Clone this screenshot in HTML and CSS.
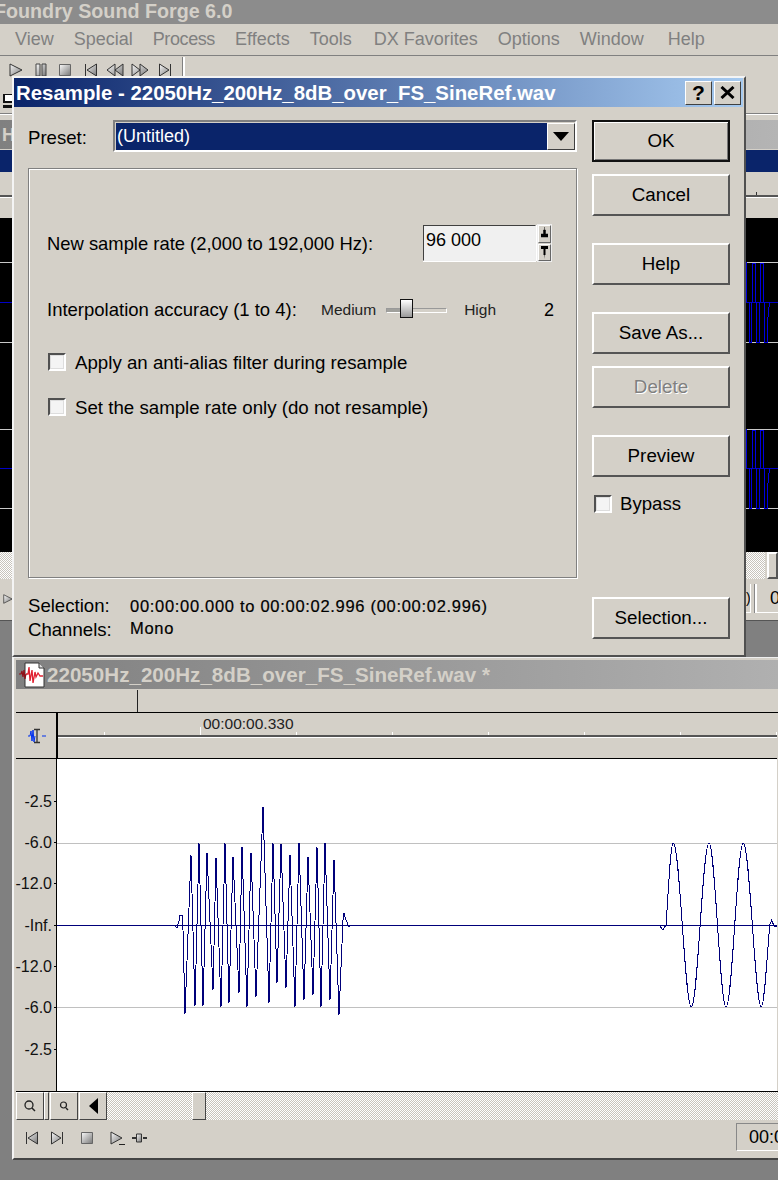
FILE: index.html
```html
<!DOCTYPE html>
<html lang="en">
<head>
<meta charset="utf-8">
<title>Sound Forge - Resample</title>
<link rel="stylesheet" href="styles.css">
</head>
<body>
<svg class="defs" width="0" height="0" aria-hidden="true">
  <defs>
    <linearGradient id="metal" x1="0" y1="0" x2="1" y2="1">
      <stop offset="0" stop-color="#fafafa"/>
      <stop offset="1" stop-color="#777"/>
    </linearGradient>
    <symbol id="i-play" viewBox="0 0 14 14"><path d="M1 1L13 7L1 13Z" fill="url(#metal)" stroke="#333"/></symbol>
    <symbol id="i-pause" viewBox="0 0 14 14"><path d="M2 1h4v12H2ZM8 1h4v12H8Z" fill="url(#metal)" stroke="#444"/></symbol>
    <symbol id="i-stop" viewBox="0 0 14 14"><path d="M1.500 1.500h11v11h-11Z" fill="url(#metal)" stroke="#666"/></symbol>
    <symbol id="i-start" viewBox="0 0 14 14"><path d="M1.500 1v12M12.500 1L3 7L12.500 13Z" fill="url(#metal)" stroke="#333"/></symbol>
    <symbol id="i-end" viewBox="0 0 14 14"><path d="M12.500 1v12M1.500 1L11 7L1.500 13Z" fill="url(#metal)" stroke="#333"/></symbol>
    <symbol id="i-rew" viewBox="0 0 18 14"><path d="M9 1L1 7L9 13ZM17 1L9 7L17 13Z" fill="url(#metal)" stroke="#333"/></symbol>
    <symbol id="i-ff" viewBox="0 0 18 14"><path d="M1 1L9 7L1 13ZM9 1L17 7L9 13Z" fill="url(#metal)" stroke="#333"/></symbol>
  </defs>
</svg>

<div class="app">
  <div class="app-title">Foundry Sound Forge 6.0</div>
  <nav class="menu">
    <span>View</span><span>Special</span><span class="m-process">Process</span><span>Effects</span><span>Tools</span><span class="m-dx">DX Favorites</span><span>Options</span><span>Window</span><span class="m-help">Help</span>
  </nav>
  <div class="toolbar">
    <div class="tool-row">
      <svg class="ic ic-play"><use href="#i-play"/></svg>
      <svg class="ic ic-pause"><use href="#i-pause"/></svg>
      <svg class="ic ic-stop"><use href="#i-stop"/></svg>
      <svg class="ic ic-start"><use href="#i-start"/></svg>
      <svg class="ic-w ic-rew"><use href="#i-rew"/></svg>
      <svg class="ic-w ic-ff"><use href="#i-ff"/></svg>
      <svg class="ic ic-end"><use href="#i-end"/></svg>
      <i class="tool-divider"></i>
    </div>
    <svg class="floppy" width="10" height="14" viewBox="0 0 10 14"><path d="M0 0h10v14H0Z" fill="#111"/><path d="M2 1h7v6H2Z" fill="#fff"/><path d="M0 9h10v2H0Z" fill="#d4d0c8"/></svg>
  </div>

  <section class="back">
    <div class="back-title">H</div>
    <div class="back-active"></div>
    <div class="back-band"><i class="back-mark"></i></div>
    <div class="back-ruler"></div>
    <svg class="back-wave" width="778" height="334" viewBox="0 0 778 334">
      <rect width="778" height="334" fill="#000"/>
      <path d="M0 44.500H778M0 124.500H778M0 211.500H778M0 290.500H778" stroke="#c8c8c8" fill="none"/>
      <path d="M0 84.500H778M0 250.500H778" stroke="#0000c8" fill="none"/>
      <g fill="none" stroke="#0000e0" shape-rendering="crispEdges">
        <path d="M746.500 44V84M752.500 84V45H755.500V84M760.500 84V45H763.500V84M749.500 84V124H751.500V84M756.500 84V124H759.500V84M764.500 84V124H767.500V104L769.500 84"/>
        <path d="M746.500 211V250M752.500 250V212H755.500V250M760.500 250V212H763.500V250M749.500 250V290H751.500V250M756.500 250V290H759.500V250M764.500 250V290H767.500V270L769.500 250"/>
      </g>
    </svg>
    <div class="back-scroll"><i class="checker checker-a"></i><i class="back-thumb"></i></div>
    <div class="back-status">
      <svg class="ic ic-back-play"><use href="#i-play"/></svg>
      <span class="status-box status-cut">)</span>
      <span class="status-box status-zero">0</span>
    </div>
  </section>

  <section class="win">
    <div class="win-title">
      <svg class="file-icon" width="27" height="26" viewBox="0 0 27 26">
        <path d="M7 1H21L26 6V25H7Z" fill="#fff" stroke="#333"/>
        <path d="M21 1V6H26" fill="#ddd" stroke="#333"/>
        <path d="M8 12H10L11 5L12 19L14 8L15 21L17 10L18 15L20 11L22 14H25" fill="none" stroke="#e02030" stroke-width="1.300"/>
        <path d="M1 12H3L4 9L5 15L6 8L7 17L8 12" fill="none" stroke="#901018" stroke-width="1.200"/>
      </svg>
      <span>22050Hz_200Hz_8dB_over_FS_SineRef.wav *</span>
    </div>
    <div class="win-marker"><i class="marker-line"></i></div>
    <div class="win-main">
      <aside class="side">
        <div class="side-head">
          <svg width="20" height="16" viewBox="0 0 20 16">
            <path d="M1 8H3L4 3L5 13L6 2L7 14L8 8M15 8H19" fill="none" stroke="#0030f0"/>
            <path d="M7 1.500H13M10 1.500V14.500M7 14.500H13" fill="none" stroke="#333" stroke-width="1.300"/>
          </svg>
        </div>
        <div class="scale">
          <span>-2.5</span><span>-6.0</span><span>-12.0</span><span>-Inf.</span><span>-12.0</span><span>-6.0</span><span>-2.5</span>
        </div>
      </aside>
      <div class="track">
        <div class="ruler">
          <span class="ruler-time">00:00:00.330</span>
          <svg class="ruler-ticks" width="720" height="8" viewBox="0 0 720 8">
            <path d="M47.500 5V8M143.500 0V8M239.500 5V8M335.500 5V8M431.500 5V8M527.500 5V8M623.500 5V8M719.500 5V8" stroke="#fff"/>
          </svg>
        </div>
        <div class="ruler-gap"></div>
        <svg class="wave" width="720" height="332" viewBox="58 759 720 332">
          <rect x="58" y="759" width="720" height="332" fill="#fff"/>
          <path d="M58 843.500H778M58 1007.500H778" stroke="#c0c0c0"/>
          <path d="M58 925.500H778" stroke="#00007a"/>
          <g fill="none" stroke="#00007a" shape-rendering="crispEdges">
            <polyline points="176,926 178,928 180,921 181,915 183,915 184,930 186,1014 192,855 196,1006 200,843 204,1006 208,853 214,990 217,858 222,1007 226,843 230,1003 234,857 240,993 243,847 248,1007 252,853 257,997 264,807 270,1003 274,843 278,983 282,844 287,988 291,855 296,1007 300,843 305,1000 309,857 314,995 318,847 322,1007 326,843 331,1000 335,860 340,1015 344,920 345,913 347,920 350,927 352,925"/>
            <path d="M660 925L664 930L667 925C669.500 890 671.500 843 674.300 843C680.800 843 685.800 1007 692.300 1007C698.800 1007 703.500 843 710 843C716 843 721 1007 727 1007C733.500 1007 738 843 744.300 843C750.800 843 756 1007 762.300 1007C765 1007 768 960 770.700 925L772.700 920L775 926L778 926"/>
          </g>
        </svg>
      </div>
    </div>
    <div class="scrollbar">
      <button class="sb-btn" type="button"><svg width="14" height="14" viewBox="0 0 14 14"><circle cx="6" cy="6" r="4" fill="none" stroke="#222" stroke-width="1.300"/><path d="M9 9L12 12" stroke="#222" stroke-width="1.500"/></svg></button>
      <i class="sb-split"></i>
      <button class="sb-btn" type="button"><svg width="12" height="12" viewBox="0 0 12 12"><circle cx="5.500" cy="5" r="3" fill="none" stroke="#222" stroke-width="1.200"/><path d="M8 8L10 10" stroke="#222" stroke-width="1.500"/></svg></button>
      <button class="sb-btn sb-arrow" type="button"><svg width="9" height="16" viewBox="0 0 9 16"><path d="M9 0V16L0 8Z" fill="#000"/></svg></button>
      <div class="checker sb-track"><i class="sb-thumb"></i></div>
    </div>
    <div class="transport">
      <svg class="ic t-start"><use href="#i-start"/></svg>
      <svg class="ic t-end"><use href="#i-end"/></svg>
      <svg class="ic t-stop"><use href="#i-stop"/></svg>
      <svg class="t-play" width="16" height="15" viewBox="0 0 16 15"><path d="M1 1L12 7L1 13Z" fill="url(#metal)" stroke="#333"/><path d="M9 13.500H15" stroke="#222"/></svg>
      <svg class="t-slide" width="17" height="10" viewBox="0 0 17 10"><path d="M1 5H5M12 5H16" stroke="#333" stroke-width="2"/><path d="M5.500 1H10.500V9H5.500Z" fill="url(#metal)" stroke="#333"/></svg>
      <span class="counter">00:00</span>
    </div>
  </section>
</div>

<div class="dialog">
  <header class="dlg-title">
    <span class="dlg-caption">Resample - 22050Hz_200Hz_8dB_over_FS_SineRef.wav</span>
    <span class="cap-btn cap-help">?</span>
    <span class="cap-btn"><svg width="15" height="13" viewBox="0 0 15 13"><path d="M1.500 1L13.500 12M13.500 1L1.500 12" stroke="#000" stroke-width="3"/></svg></span>
  </header>
  <div class="dlg-body">
    <div class="dlg-left">
      <div class="preset">
        <label class="preset-label">Preset:</label>
        <div class="combo">
          <span class="combo-value">(Untitled)</span>
          <span class="combo-btn"><svg width="16" height="9" viewBox="0 0 16 9"><path d="M0 0H16L8 9Z" fill="#000"/></svg></span>
        </div>
      </div>
      <div class="group">
        <div class="row-rate">
          <span class="rate-label">New sample rate (2,000 to 192,000 Hz):</span>
          <span class="rate-input">96 000</span>
          <span class="spin">
            <span class="spin-btn"><svg width="7" height="13" viewBox="0 0 7 13"><path d="M3.500 0V3M2.500 3H4.500V7H7V10H0V7H2.500Z" fill="#000" stroke="#000" stroke-width=".5"/></svg></span>
            <span class="spin-btn"><svg width="7" height="13" viewBox="0 0 7 13"><path d="M0 0H7V3H4.500V9H3.500V13L3 9H2.500V3H0Z" fill="#000"/></svg></span>
          </span>
        </div>
        <div class="row-interp">
          <span class="interp-label">Interpolation accuracy (1 to 4):</span>
          <span class="small-label">Medium</span>
          <span class="slider"><i class="slider-thumb"></i></span>
          <span class="small-label high">High</span>
          <span class="interp-value">2</span>
        </div>
        <div class="check-row first"><i class="check"></i><span>Apply an anti-alias filter during resample</span></div>
        <div class="check-row second"><i class="check"></i><span>Set the sample rate only (do not resample)</span></div>
      </div>
      <dl class="info">
        <dt>Selection:</dt><dd>00:00:00.000 to 00:00:02.996 (00:00:02.996)</dd>
        <dt>Channels:</dt><dd class="info-mono">Mono</dd>
      </dl>
    </div>
    <div class="dlg-right">
      <button class="btn btn-default" type="button">OK</button>
      <button class="btn near" type="button">Cancel</button>
      <button class="btn far" type="button">Help</button>
      <button class="btn far" type="button">Save As...</button>
      <button class="btn near btn-disabled" type="button">Delete</button>
      <button class="btn far" type="button">Preview</button>
      <div class="bypass"><i class="check"></i><span>Bypass</span></div>
      <button class="btn btn-selection" type="button">Selection...</button>
    </div>
  </div>
</div>
</body>
</html>
```
FILE: styles.css
```css
* { box-sizing: border-box; }
html, body { margin: 0; padding: 0; }
body {
  position: relative;
  width: 778px;
  height: 1180px;
  overflow: hidden;
  background: #808080;
  font-family: "Liberation Sans", Arial, sans-serif;
  font-size: 18px;
  color: #000;
}
i { display: block; font-style: normal; }
svg { display: block; }
.defs { position: absolute; }

.app { display: flex; flex-direction: column; width: 778px; height: 1180px; overflow: hidden; }
.app > * { flex: none; }

.app-title {
  height: 24px;
  background: #8c8c8c;
  color: #d4d0c8;
  font-weight: 700;
  font-size: 19.700px;
  line-height: 22px;
  text-indent: -6px;
  white-space: nowrap;
  overflow: hidden;
}
.menu {
  display: flex;
  gap: 20px;
  height: 32px;
  padding-left: 15px;
  line-height: 30px;
  background: #d4d0c8;
  color: #808080;
  border-bottom: 1px solid #808080;
  white-space: nowrap;
}
.m-process { letter-spacing: -.4px; }
.m-dx { margin-left: 2px; }
.m-help { margin-left: 4px; }
.toolbar { height: 57px; background: #d4d0c8; }
.tool-row { display: flex; height: 38px; padding: 7px 0 0 9px; }
.ic { width: 14px; height: 14px; flex: none; }
.ic-w { width: 18px; height: 14px; flex: none; }
.ic-pause { margin-left: 11px; }
.ic-stop { margin-left: 10px; }
.ic-start { margin-left: 12px; }
.ic-rew { margin-left: 8px; }
.ic-ff { margin-left: 7px; }
.ic-end { margin-left: 9px; }
.tool-divider { width: 2px; height: 20px; margin: -6px 0 0 11px; background: #fff; box-shadow: -1px 0 #808080; }
.floppy { margin-left: 3px; }

.back { display: flex; flex-direction: column; height: 508px; border-top: 1px solid #808080; background: #d4d0c8; box-shadow: inset 0 1px #fff; padding-top: 6px; }
.back > * { flex: none; }
.back-title {
  height: 29px;
  padding-left: 2px;
  background: linear-gradient(90deg, #808080, #b4b4b4);
  color: #d4d0c8;
  font-weight: 700;
  line-height: 30px;
}
.back-active { height: 22px; background: #0a246a; margin-top: 1px; }
.back-band { position: relative; height: 25px; border-bottom: 2px solid #555; }
.back-mark { position: absolute; left: 756px; bottom: 0; width: 1px; height: 3px; background: #333; }
.back-ruler { height: 21px; border-top: 1px solid #fff; }
.back-scroll { display: flex; justify-content: space-between; height: 27px; }
.checker-a { width: 765px; }
.checker {
  background: repeating-conic-gradient(#fff 0 25%, #c8c4bc 0 50%) 0 0 / 2px 2px;
}
.back-thumb { width: 11px; height: 27px; border: 2px solid; border-color: #fff #555 #555 #fff; background: #d4d0c8; }
.back-status { display: flex; align-items: flex-start; height: 42px; padding-top: 5px; border-bottom: 1px solid #555; }
.ic-back-play { margin: 8px 0 0 3px; width: 10px; }
.status-box { height: 29px; line-height: 28px; border-bottom: 1px solid #fff; overflow: hidden; }
.status-cut { margin-left: 733px; width: 5px; text-align: left; border-right: 1px solid #fff; font-size: 14px; }
.status-zero { flex: 1; margin-left: 4px; padding-left: 13px; border-left: 2px solid #fff; box-shadow: -1px 0 #888; }

.win {
  height: 503px;
  margin: 36px 0 0 12px;
  padding: 3px 0 0 2px;
  border-left: 2px solid #f4f4f4;
  border-bottom: 2px solid #444;
  background: #d4d0c8;
  box-shadow: inset 0 1px #eee;
  display: flex;
  flex-direction: column;
}
.win-title {
  display: flex;
  align-items: center;
  flex: none;
  height: 29px;
  background: linear-gradient(90deg, #808080, #b0b0b0);
  color: #d4d0c8;
  font-weight: 700;
  font-size: 20.600px;
  white-space: nowrap;
}
.file-icon { margin: 0 2px 0 2px; flex: none; }
.win-marker { position: relative; flex: none; height: 23px; }
.marker-line { position: absolute; left: 121px; top: 1px; bottom: 0; width: 1px; background: #222; }
.win-main { display: flex; flex: none; height: 380px; border-top: 1px solid #000; border-bottom: 1px solid #000; }
.side { width: 41px; flex: none; border-right: 1px solid #000; }
.side-head { height: 46px; padding: 15px 0 0 11px; border-bottom: 1px solid #000; }
.scale { display: flex; flex-direction: column; align-items: flex-end; padding-top: 21.500px; }
.scale span {
  position: relative;
  height: 41.400px;
  line-height: 41.400px;
  padding-right: 4px;
  font-size: 16px;
  color: #111;
  white-space: nowrap;
}
.scale span::after { content: ""; position: absolute; right: 0; top: 20px; width: 2px; height: 1px; background: #000; }
.track { flex: none; width: 720px; border-left: 1px solid #000; }
.ruler { position: relative; height: 24px; border-bottom: 2px solid #555; padding-left: 145px; line-height: 22px; font-size: 15.500px; color: #222; white-space: nowrap; }
.ruler-ticks { position: absolute; left: -1px; bottom: 0; }
.ruler-gap { height: 22px; border-top: 1px solid #fff; border-bottom: 1px solid #000; }
.wave { margin-left: -1px; }

.scrollbar { display: flex; flex: none; height: 28px; }
.sb-btn, .sb-track { flex: none; }
.sb-btn {
  display: flex;
  align-items: center;
  justify-content: center;
  width: 28px;
  height: 28px;
  padding: 0;
  border: 1px solid;
  border-color: #fff #444 #444 #fff;
  background: #d4d0c8;
}
.sb-split { width: 5px; margin-right: 1px; border: 1px solid; border-color: #fff #444 #444 #fff; }
.sb-arrow { margin-left: 1px; }
.sb-track { flex: 1; padding-left: 85px; }
.sb-thumb { width: 14px; height: 28px; border: 1px solid; border-color: #fff #444 #444 #fff; background: #d4d0c8; }

.transport { display: flex; flex: none; align-items: center; height: 38px; padding: 0 0 2px 9px; }
.t-end { margin-left: 11px; }
.t-stop { margin-left: 16px; }
.t-play { margin-left: 16px; }
.t-slide { margin-left: 5px; }
.counter {
  width: 42px;
  height: 28px;
  margin-left: auto;
  margin-top: -2px;
  padding-left: 12px;
  line-height: 27px;
  overflow: hidden;
  white-space: nowrap;
  border: 1px solid #888;
  border-right: 0;
  border-bottom-color: #fff;
}

.dialog {
  position: absolute;
  left: 12px;
  top: 76px;
  width: 734px;
  height: 581px;
  display: flex;
  flex-direction: column;
  border: 2px solid;
  border-color: #f4f4f4 #505050 #505050 #f4f4f4;
  padding-right: 1px;
  background: #d4d0c8;
  font-size: 18.600px;
}
.dlg-title {
  display: flex;
  align-items: center;
  flex: none;
  height: 29px;
  padding: 0 2px 0 2px;
  gap: 2px;
  background: linear-gradient(90deg, #0a246a, #a6caf0);
  color: #fff;
  font-weight: 700;
  font-size: 20.400px;
  white-space: nowrap;
}
.dlg-caption { flex: 1; padding-top: 1px; }
.cap-btn {
  display: flex;
  align-items: center;
  justify-content: center;
  width: 27px;
  height: 24px;
  border: 1px solid;
  border-color: #fff #404040 #404040 #fff;
  background: #d4d0c8;
  color: #000;
}
.cap-help { font-size: 21px; font-weight: 700; }
.dlg-body { display: flex; flex: 1; padding: 13px 0 0 14px; gap: 15px; }
.dlg-left { width: 549px; flex: none; }
.preset { display: flex; align-items: center; height: 32px; }
.preset-label { width: 85px; flex: none; padding-top: 4px; }
.combo {
  display: flex;
  width: 464px;
  height: 32px;
  padding: 1px 0 0 1px;
  border: 2px solid;
  border-color: #808080 #fff #fff #808080;
  font-size: 18px;
}
.combo-value { flex: 1; padding-left: 1px; line-height: 26px; background: #0a246a; color: #fff; }
.combo-btn {
  display: flex;
  align-items: center;
  justify-content: center;
  width: 28px;
  border: 1px solid;
  border-color: #fff #404040 #404040 #fff;
  background: #d4d0c8;
}
.group {
  height: 410px;
  margin-top: 16px;
  padding: 56px 0 0 18px;
  border: 1px solid #808080;
  box-shadow: inset 1px 1px #fff, 1px 1px #fff;
}
.row-rate { display: flex; align-items: center; height: 36px; }
.rate-label { width: 376px; flex: none; padding-top: 1px; white-space: nowrap; font-size: 18.400px; }
.rate-input {
  align-self: stretch;
  width: 113px;
  padding-left: 2px;
  font-size: 18px;
  line-height: 29px;
  background: #f0f0f0;
  border: 1px solid;
  border-color: #404040 #eee #eee #404040;
  box-shadow: 0 1px #fff, 1px 0 #fff;
}
.spin { display: flex; flex-direction: column; margin-left: 2px; width: 13px; height: 36px; gap: 1px; box-shadow: 0 0 0 1px #eee; }
.spin-btn { display: flex; align-items: center; justify-content: center; flex: 1; border: 1px solid; border-color: #fff #666 #666 #fff; }
.row-interp { display: flex; align-items: center; height: 24px; margin-top: 37px; white-space: nowrap; }
.interp-label { width: 274px; flex: none; font-size: 18.500px; }
.small-label { font-size: 15.500px; color: #222; }
.slider { position: relative; width: 61px; height: 5px; margin: 0 0 0 10px; background: linear-gradient(90deg, #a0a09c 20px, #d4d0c8 20px); border: 1px solid; border-color: #999 #fff #fff #999; }
.slider-thumb {
  position: absolute;
  left: 13px;
  top: -10px;
  width: 13px;
  height: 19px;
  border: 1px solid #111;
  background: linear-gradient(180deg, #fff, #999);
}
.high { margin-left: 17px; }
.interp-value { margin-left: 48px; font-size: 18px; }
.check-row { display: flex; align-items: center; height: 18px; gap: 9px; white-space: nowrap; margin-left: 1px; }
.check-row span { padding-top: 2px; font-size: 18.700px; }
.check-row.first { margin-top: 31px; }
.check-row.second { margin-top: 27px; }
.check {
  width: 18px;
  height: 18px;
  flex: none;
  background: #f4f4f4;
  border: 2px solid;
  border-color: #505050 #fff #fff #505050;
  box-shadow: inset 0 0 0 1px #ddd;
}
.info { display: grid; grid-template-columns: 102px 1fr; grid-auto-rows: 24px; margin: 16px 0 0; line-height: 24px; }
.info dt, .info dd { margin: 0; white-space: nowrap; }
.info dd { font-size: 16.500px; letter-spacing: .7px; -webkit-text-stroke: .2px #000; }
.info-mono { line-height: 20px; }
.dlg-right { display: flex; flex-direction: column; width: 138px; flex: none; }
.btn {
  flex: none;
  height: 42px;
  padding: 0;
  font: inherit;
  font-size: 18.800px;
  color: #000;
  background: #d4d0c8;
  border: 2px solid;
  border-color: #fff #555 #555 #fff;
}
.btn-default { border-color: #111; box-shadow: inset 1px 1px #fff, inset -1px -1px #777; }
.near { margin-top: 12px; }
.far { margin-top: 27px; }
.btn-disabled { color: #808080; text-shadow: 1px 1px #fff; }
.bypass { display: flex; align-items: center; gap: 8px; height: 18px; margin: 18px 0 0 2px; }
.btn-selection { margin-top: 84px; }
```
